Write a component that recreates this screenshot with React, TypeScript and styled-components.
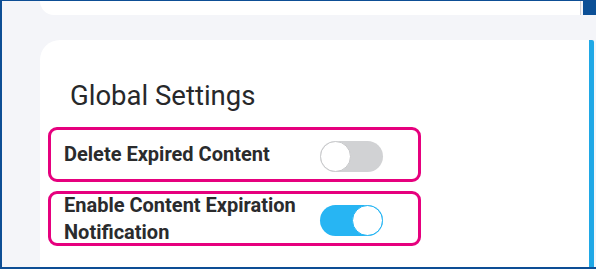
import React, { useState } from 'react';
import styled, { createGlobalStyle } from 'styled-components';

const GlobalStyle = createGlobalStyle`
  html, body {
    margin: 0;
    padding: 0;
    background: #ffffff;
  }
  * {
    box-sizing: border-box;
  }
`;

const Frame = styled.div`
  width: 596px;
  height: 269px;
  display: flex;
  flex-direction: column;
  padding-left: 38px;
  background: #f4f5f9;
  border-left: 2px solid #0d4e95;
  border-top: 1px solid #0d4e95;
  border-bottom: 2px solid #0d4e95;
  overflow: hidden;
  font-family: Roboto, 'Liberation Sans', sans-serif;
`;

const TopRow = styled.div`
  display: grid;
  grid-template-columns: 541px 13px;
  column-gap: 2px;
  height: 14px;
  flex-shrink: 0;
`;

const TopCard = styled.div`
  background: #ffffff;
  border-bottom-left-radius: 16px;
  border-right: 1px solid #cfd0d6;
`;

const ScrollThumb = styled.div`
  background: #0b4f96;
`;

const Card = styled.section`
  flex: 1;
  margin-top: 25px;
  margin-right: 2px;
  padding: 41px 0 0 8px;
  background: #ffffff;
  border-top-left-radius: 20px;
  border-right: 5px solid #1fa8e6;
  border-top-right-radius: 2px;
`;

const Title = styled.h2`
  margin: 0 0 16px;
  padding-left: 22px;
  font-size: 27.5px;
  line-height: 30px;
  font-weight: 400;
  color: #27282a;
`;

const SettingsList = styled.div`
  display: flex;
  flex-direction: column;
  gap: 9px;
`;

const SettingRow = styled.div`
  width: 373px;
  height: 55px;
  display: flex;
  align-items: center;
  gap: 20px;
  padding: 1px 35px 0 13px;
  border: 3px solid #e6007e;
  border-radius: 9px;
`;

const Label = styled.span`
  flex: 1;
  font-size: 20px;
  line-height: 27.5px;
  font-weight: 700;
  color: #2a2b2d;
`;

const Switch = styled.button<{ $on: boolean }>`
  width: 63px;
  height: 31px;
  flex-shrink: 0;
  margin-top: 3px;
  padding: 0;
  display: flex;
  justify-content: ${(p) => (p.$on ? 'flex-end' : 'flex-start')};
  border: none;
  border-radius: 16px;
  background: ${(p) => (p.$on ? '#27b5f3' : '#d1d2d4')};
  cursor: pointer;
`;

const Knob = styled.span<{ $on: boolean }>`
  width: 31px;
  height: 31px;
  border-radius: 50%;
  background: #ffffff;
  border: 1.5px solid ${(p) => (p.$on ? '#27b5f3' : '#c9cacc')};
`;

const settings = [
  { id: 'delete', label: 'Delete Expired Content', on: false },
  { id: 'notify', label: 'Enable Content Expiration Notification', on: true },
];

const App = () => {
  const [values, setValues] = useState<Record<string, boolean>>(
    Object.fromEntries(settings.map((s) => [s.id, s.on]))
  );

  const toggle = (id: string) => setValues((v) => ({ ...v, [id]: !v[id] }));

  return (
    <>
      <GlobalStyle />
      <Frame>
        <TopRow>
          <TopCard />
          <ScrollThumb />
        </TopRow>
        <Card>
          <Title>Global Settings</Title>
          <SettingsList>
            {settings.map((s) => (
              <SettingRow key={s.id}>
                <Label>{s.label}</Label>
                <Switch $on={values[s.id]} onClick={() => toggle(s.id)} aria-pressed={values[s.id]}>
                  <Knob $on={values[s.id]} />
                </Switch>
              </SettingRow>
            ))}
          </SettingsList>
        </Card>
      </Frame>
    </>
  );
};

export default App;
